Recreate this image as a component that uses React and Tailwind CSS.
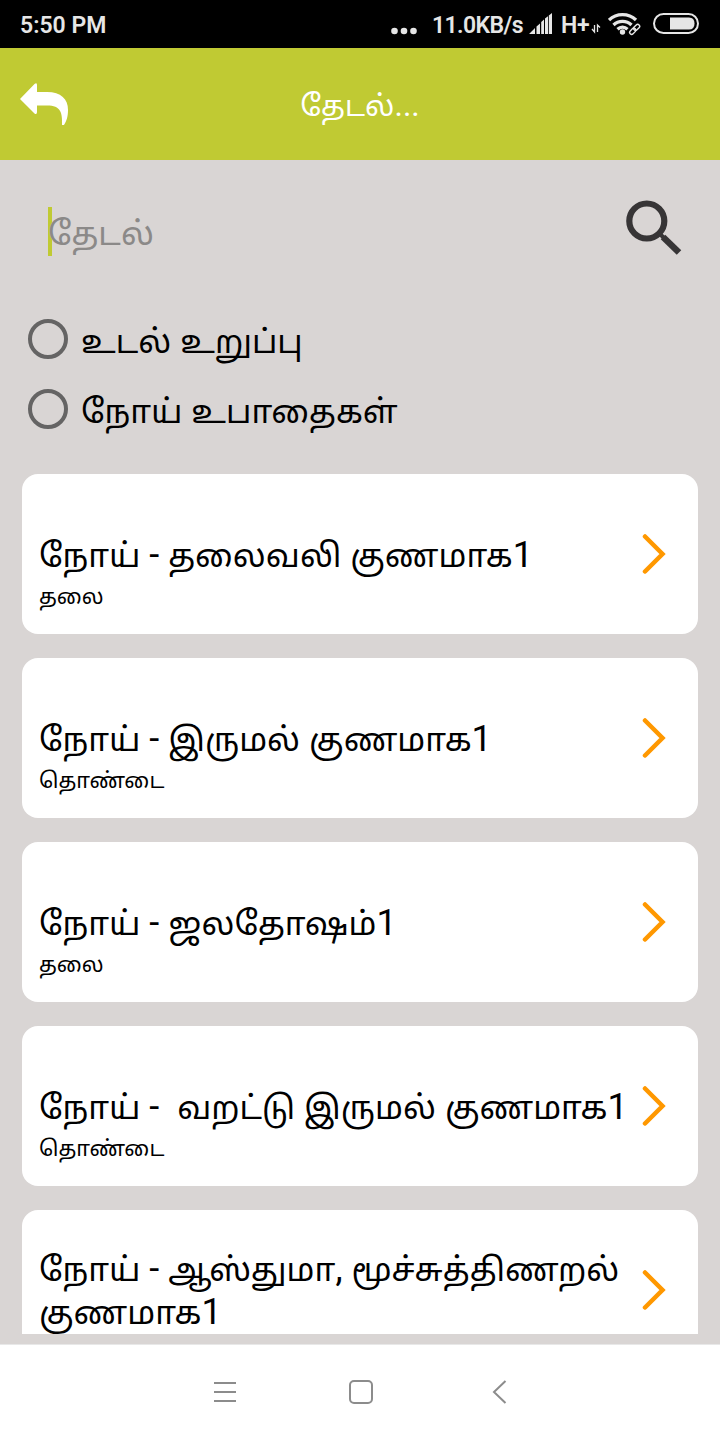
import { Fragment, useState } from 'react';

const results = [
  { id: 1, title: 'நோய் - தலைவலி குணமாக1', part: 'தலை' },
  { id: 2, title: 'நோய் - இருமல் குணமாக1', part: 'தொண்டை' },
  { id: 3, title: 'நோய் - ஜலதோஷம்1', part: 'தலை' },
  { id: 4, title: 'நோய் -  வறட்டு இருமல் குணமாக1', part: 'தொண்டை' },
  { id: 5, title: 'நோய் - ஆஸ்துமா, மூச்சுத்திணறல் குணமாக1', part: '' },
];

const filters = [
  { id: 'organ', label: 'உடல் உறுப்பு' },
  { id: 'disease', label: 'நோய் உபாதைகள்' },
];

// Digits, dashes and spaces are set a little larger than the Tamil letters
function MixedText({ children }) {
  return children.split(/([\d\s,-]+)/).map((run, i) => (
    i % 2 ? <span key={i} className="text-[36px]">{run}</span> : <Fragment key={i}>{run}</Fragment>
  ));
}

// Android status bar
function StatusBar() {
  return (
    <div className="flex h-12 shrink-0 items-center bg-black pl-5 text-[23px] leading-7 font-semibold text-[#e6e6e6]">
      <span className="w-[371px] shrink-0 pt-1">5:50 PM</span>
      <svg className="shrink-0" width="26" height="48" viewBox="0 0 26 48" fill="currentColor">
        <circle cx="3.5" cy="31" r="3.3" />
        <circle cx="13" cy="31" r="3.3" />
        <circle cx="22.5" cy="31" r="3.3" />
      </svg>
      <span className="ml-[15px] w-[97px] shrink-0 pt-1 tracking-[-0.6px] whitespace-nowrap">11.0KB/s</span>
      <svg className="shrink-0" width="24" height="48" viewBox="0 0 24 48" fill="currentColor">
        <path d="M0 34L6 28V34ZM7.500 26.500L11 23.500V34H7.500ZM12.200 22L15 19.500V34H12.200ZM16 18.500L19 16.200V34H16ZM19.800 15.500L23 13V34H19.800Z" />
      </svg>
      <span className="ml-2 w-[29px] shrink-0 pt-1 tracking-[-0.4px] whitespace-nowrap">H+</span>
      <svg className="shrink-0" width="12" height="48" viewBox="0 0 12 48" fill="none" stroke="currentColor" strokeWidth="1.300">
        <path d="M4.500 25V32M2 29L4.500 32V25M7.500 32V25L10 27.500" />
      </svg>
      <svg className="ml-1.5 shrink-0" width="34" height="48" viewBox="0 0 34 48" fill="none" stroke="currentColor" strokeWidth="3.300">
        <path d="M1 20C8.500 12.800 20.500 12.800 28 20M5.500 25C10.500 20.200 18.500 20.200 23.500 25M9.500 29.300C12.500 26.500 16.500 26.500 19.500 29.300" />
        <circle cx="14.500" cy="32" r="2.700" fill="currentColor" stroke="none" />
        <g transform="rotate(-45 26.500 29.500)" strokeWidth="4" stroke="#000">
          <rect x="21" y="27.500" width="11.500" height="4" rx="2" />
        </g>
        <g transform="rotate(-45 26.500 29.500)" strokeWidth="1.400">
          <rect x="20.500" y="27.500" width="7" height="4" rx="2" />
          <rect x="26" y="27.500" width="7" height="4" rx="2" />
        </g>
      </svg>
      <svg className="mr-5 ml-auto shrink-0" width="48" height="48" viewBox="0 0 48 48">
        <rect x="2" y="14" width="44" height="19" rx="9.500" fill="none" stroke="currentColor" strokeWidth="2" />
        <path d="M18 17.500H37Q42.500 17.500 42.500 23.500T37 29.500H18Z" fill="currentColor" />
      </svg>
    </div>
  );
}

// Title bar with the back arrow
function Header() {
  return (
    <header className="grid h-28 shrink-0 grid-cols-[80px_1fr_80px] items-center bg-[#c0ca33] text-white">
      <button className="pl-5" aria-label="Back">
        <svg width="49" height="44" viewBox="0 0 49 44" fill="currentColor">
          <path d="M0 17L14.500 2Q17 0 17 3V10H27C41 10 48 17 48 28C48 35 46.500 39 44 43H42C42.500 31 41 23.500 27 23.500H17V30Q17 33 14.500 31.500Z" />
        </svg>
      </button>
      <h1 className="pt-1 text-center text-[29px] leading-10">
        தேடல்<span className="text-[32px] leading-none">...</span>
      </h1>
    </header>
  );
}

function SearchBox() {
  return (
    <div className="flex h-[142px] shrink-0 items-start justify-between pt-10 pr-[38px] pl-12">
      <div className="mt-[7px] flex h-[49px] items-center">
        <span className="h-[49px] w-1 bg-[#c0ca33]" />
        <span className="-ml-1 pt-1 text-[32.600px] leading-[42px] whitespace-nowrap text-[#8b8988]">தேடல்</span>
      </div>
      <button aria-label="Search">
        <svg width="56" height="56" viewBox="0 0 56 56" fill="none" stroke="#373536">
          <circle cx="20.800" cy="21" r="17.500" strokeWidth="6.200" />
          <path d="M37 37L53 52.500" strokeWidth="6.500" />
          <path d="M33 33L40 40" strokeWidth="4" />
        </svg>
      </button>
    </div>
  );
}

function FilterOption({ filter, checked, onSelect }) {
  return (
    <label className="flex h-[70px] items-center gap-[13px]">
      <input
        type="radio"
        name="filter"
        checked={checked}
        onChange={() => onSelect(filter.id)}
        className="size-10 appearance-none rounded-full border-4 border-[#656464] checked:border-[#c0ca33]"
      />
      <span className="pt-1 text-[32.600px] leading-[42px] whitespace-nowrap">
        <MixedText>{filter.label}</MixedText>
      </span>
    </label>
  );
}

function ResultCard({ item }) {
  return (
    <li className="flex h-40 shrink-0 items-center justify-between rounded-2xl bg-white pr-8 pl-[17px]">
      <div className="grid h-full w-[595px] grid-rows-[1fr_auto_1fr] pt-0.5">
        <p className="row-start-2 text-[32.600px] leading-[42px] whitespace-pre-wrap">
          <MixedText>{item.title}</MixedText>
        </p>
        {item.part && <p className="row-start-3 mt-1.5 text-[21.600px] leading-7">{item.part}</p>}
      </div>
      <svg className="-ml-4 shrink-0" width="24" height="42" viewBox="0 0 24 42" fill="none" stroke="#ff9800" strokeWidth="4.500" strokeLinecap="round">
        <path d="M3 3.500L20.500 21L3 38.500" />
      </svg>
    </li>
  );
}

// System navigation buttons
function NavBar() {
  return (
    <nav className="flex h-24 shrink-0 items-center border-t border-[#e8e8e8] bg-white pb-0.5 pl-[213px] text-[#8c8c8c]">
      <svg width="24" height="28" viewBox="0 0 24 28" fill="none" stroke="currentColor" strokeWidth="2">
        <path d="M1 5H23M1 14H23M1 23H23" />
      </svg>
      <svg className="ml-[111px]" width="26" height="28" viewBox="0 0 26 28" fill="none" stroke="currentColor" strokeWidth="2">
        <rect x="2" y="3" width="22" height="22" rx="4" />
      </svg>
      <svg className="ml-[117px]" width="18" height="28" viewBox="0 0 18 28" fill="none" stroke="currentColor" strokeWidth="2">
        <path d="M14.500 3L3 14L14.500 25" />
      </svg>
    </nav>
  );
}

export default function App() {
  const [selected, setSelected] = useState(null);

  return (
    <div className="flex h-[1440px] w-[720px] flex-col overflow-hidden bg-[#d9d5d4] font-['Roboto','Noto_Sans_Tamil_UI','Noto_Sans_Tamil','Noto_Sans',sans-serif] text-black">
      <StatusBar />
      <Header />
      <SearchBox />

      {/* Filters */}
      <div className="h-[172px] shrink-0 pt-0.5 pl-7">
        {filters.map((filter) => (
          <FilterOption
            key={filter.id}
            filter={filter}
            checked={selected === filter.id}
            onSelect={setSelected}
          />
        ))}
      </div>

      {/* Results */}
      <ul className="mb-2.5 flex min-h-0 flex-1 flex-col gap-6 overflow-hidden px-[22px]">
        {results.map((item) => (
          <ResultCard key={item.id} item={item} />
        ))}
      </ul>
      <NavBar />
    </div>
  );
}
